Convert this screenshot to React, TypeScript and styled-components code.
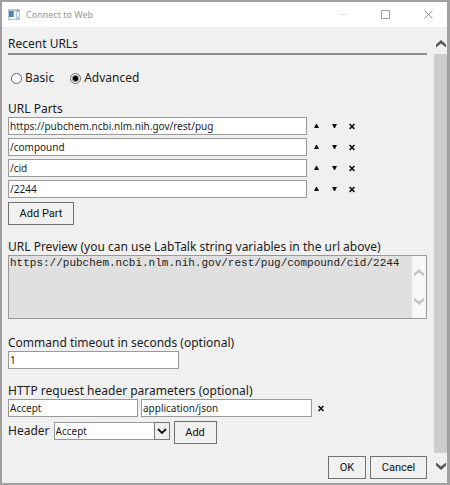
import React, { useState } from "react";
import styled, { createGlobalStyle } from "styled-components";

const GlobalStyle = createGlobalStyle`
  *, *::before, *::after { box-sizing: border-box; }
  body { margin: 0; background: #a0a0a0; }
  button, input, select, textarea { margin: 0; border-radius: 0; }
`;

const uiFont = `"Noto Sans", "Open Sans", sans-serif`;

const Dialog = styled.div`
  display: flex;
  flex-direction: column;
  min-height: 100vh;
  border: 2px solid #a0a0a0;
  border-right-width: 3px;
  background: #f0f0f0;
  color: #1c1c1c;
  font: 12px/16px ${uiFont};
`;

const TitleBar = styled.header`
  display: flex;
  align-items: center;
  gap: 6px;
  height: 25px;
  padding-left: 6px;
  background: #fff;
`;

const Title = styled.h1`
  flex: 1;
  margin: 0;
  color: #999;
  font: 9px/16px ${uiFont};
`;

const WindowButton = styled.button`
  display: flex;
  align-items: center;
  justify-content: center;
  width: 37px;
  height: 24px;
  padding: 0;
  border: 0;
  background: none;
`;

const Body = styled.div`
  display: flex;
  flex: 1;
`;

const Content = styled.main`
  display: flex;
  flex: 1;
  flex-direction: column;
  min-width: 0;
  padding: 9px 7px 4px 6px;
`;

const SectionTitle = styled.h2`
  margin: 0 0 15px;
  padding-bottom: 1px;
  border-bottom: 2px solid #8c8c8c;
  font: 12px/16px ${uiFont};
`;

const RadioRow = styled.div`
  display: flex;
  gap: 16px;
  margin-bottom: 15px;
  padding-left: 3px;
`;

const RadioLabel = styled.label`
  display: flex;
  align-items: center;
  gap: 3px;
`;

const Radio = styled.input`
  appearance: none;
  width: 11px;
  height: 11px;
  border: 1px solid #666;
  border-radius: 50%;
  background: #fff;
  &:checked { background: radial-gradient(circle, #000 0 2px, #fff 4px); }
`;

const Section = styled.section<{ $gap?: number }>`
  display: flex;
  flex-direction: column;
  align-items: flex-start;
  margin-bottom: ${(p) => p.$gap ?? 14}px;
`;

const Label = styled.label`
  display: block;
`;

const PartList = styled.div`
  display: flex;
  flex-direction: column;
  gap: 3px;
  width: 100%;
  margin-bottom: 4px;
`;

const FieldRow = styled.div`
  display: flex;
  align-items: center;
  gap: 3px;
`;

const TextField = styled.input<{ $width: number }>`
  width: ${(p) => p.$width}px;
  height: 18px;
  padding: 0 1px;
  border: 1px solid #999;
  background: #fff;
  color: #1c1c1c;
  font: 10px/16px ${uiFont};
`;

const GlyphGroup = styled.div`
  display: flex;
  gap: 6px;
`;

const GlyphButton = styled.button`
  display: flex;
  align-items: center;
  justify-content: center;
  width: 12px;
  height: 16px;
  padding: 0;
  border: 0;
  background: none;
`;

const PushButton = styled.button<{ $width: number }>`
  width: ${(p) => p.$width}px;
  height: 23px;
  padding: 0;
  border: 1px solid #707070;
  background: #f0f0f0;
  color: #111;
  font: 11px/16px Roboto, "Liberation Sans", sans-serif;
`;

const Preview = styled.div`
  display: flex;
  width: 100%;
  height: 64px;
  border: 1px solid #999;
`;

const PreviewText = styled.textarea`
  flex: 1;
  min-width: 0;
  padding: 0 1px;
  overflow: hidden;
  border: 0;
  background: #e0e0e0;
  color: #222;
  font: 11px/14px "Liberation Mono", monospace;
  resize: none;
`;

const PreviewScroll = styled.div`
  display: flex;
  flex-direction: column;
  align-items: center;
  justify-content: center;
  gap: 20px;
  width: 14px;
  background: #f8f8f8;
`;

const HeaderRow = styled.div`
  display: flex;
  align-items: flex-start;
  gap: 4px;
  margin-top: 4px;
  line-height: 20px;
`;

const SelectBox = styled.div`
  display: grid;
  width: 116px;
  margin-top: 1px;
`;

const Select = styled.select`
  grid-area: 1 / 1;
  appearance: none;
  height: 18px;
  padding: 0 18px 0 1px;
  border: 1px solid #999;
  background: #fff;
  color: #1c1c1c;
  font: 10px/16px ${uiFont};
`;

const SelectArrow = styled.span`
  display: flex;
  grid-area: 1 / 1;
  align-items: center;
  justify-content: center;
  justify-self: end;
  width: 16px;
  height: 18px;
  border: 1px solid #777;
  background: #eee;
  pointer-events: none;
`;

const Footer = styled.footer`
  display: flex;
  justify-content: flex-end;
  gap: 4px;
  margin-top: auto;
`;

const ScrollBar = styled.div`
  display: flex;
  flex-direction: column;
  align-items: center;
  width: 13px;
`;

const ScrollButton = styled.button`
  display: flex;
  align-items: center;
  justify-content: center;
  width: 13px;
  height: 20px;
  padding: 0;
  border: 0;
  background: none;
  &:first-child { margin-top: 7px; }
  &:last-child { height: 30px; padding-bottom: 4px; }
`;

const ScrollThumb = styled.div`
  flex: 1;
  width: 13px;
  background: #cdcdcd;
`;

function Chevron({ up = false, color }: { up?: boolean; color: string }) {
  return (
    <svg width="10" height="8" viewBox="0 0 10 8" aria-hidden="true">
      <path d={up ? "M0 7.5V4.5L5 0l5 4.5v3L5 3.4Z" : "M0 .5v3L5 8l5-4.5v-3L5 4.6Z"} fill={color} />
    </svg>
  );
}

function SelectChevron() {
  return (
    <svg width="10" height="7" viewBox="0 0 10 7" aria-hidden="true">
      <path d="m1 1 4 4 4-4" fill="none" stroke="#111" strokeWidth="1.8" />
    </svg>
  );
}

function Triangle({ up = false }: { up?: boolean }) {
  return (
    <svg width="5" height="5" viewBox="0 0 5 5" aria-hidden="true">
      <path d={up ? "M2 0h1l2 4H0Z" : "M0 0h5L3 4H2Z"} fill="#111" />
    </svg>
  );
}

function Cross() {
  return (
    <svg width="6" height="7" viewBox="0 0 6 7" aria-hidden="true">
      <path d="M.6 1 5.4 6M5.4 1 .6 6" stroke="#111" strokeWidth="1.6" />
    </svg>
  );
}

const AppIcon = () => (
  <svg width="12" height="11" viewBox="0 0 12 11" aria-hidden="true">
    <path fill="#b7c5cf" d="M0 0h12v11H0z" />
    <path fill="#edf4f8" d="M1 2h7v8H1zM9 3h2v5H9z" />
    <path fill="#4c86ae" d="M1 2h4v6H1z" />
    <path fill="#7fa6bd" d="M5 2h1v6H5zM9 1h2v1H9z" />
  </svg>
);

const initialParts = ["https://pubchem.ncbi.nlm.nih.gov/rest/pug", "/compound", "/cid", "/2244"];

export default function App() {
  const [parts, setParts] = useState(initialParts);
  const [mode, setMode] = useState("advanced");

  const move = (from: number, to: number) => {
    if (to < 0 || to >= parts.length) return;
    const next = [...parts];
    [next[from], next[to]] = [next[to], next[from]];
    setParts(next);
  };

  return (
    <>
      <GlobalStyle />
      <Dialog>
        <TitleBar>
          <AppIcon />
          <Title>Connect to Web</Title>
          <WindowButton aria-label="Minimize">
            <svg width="8" height="9"><path d="M0 4.5h8" stroke="#e2e2e2" /></svg>
          </WindowButton>
          <WindowButton aria-label="Maximize">
            <svg width="9" height="9"><path d="M.5.5h8v8h-8z" fill="none" stroke="#999" /></svg>
          </WindowButton>
          <WindowButton aria-label="Close">
            <svg width="9" height="9"><path d="m.5.5 8 8m0-8-8 8" stroke="#999" /></svg>
          </WindowButton>
        </TitleBar>
        <Body>
          <Content>
            <SectionTitle>Recent URLs</SectionTitle>
            <RadioRow>
              <RadioLabel>
                <Radio type="radio" name="mode" checked={mode === "basic"} onChange={() => setMode("basic")} />
                Basic
              </RadioLabel>
              <RadioLabel>
                <Radio type="radio" name="mode" checked={mode === "advanced"} onChange={() => setMode("advanced")} />
                Advanced
              </RadioLabel>
            </RadioRow>
            <Section>
              <Label htmlFor="part-0">URL Parts</Label>
              <PartList>
                {parts.map((part, i) => (
                  <FieldRow key={i}>
                    <TextField
                      $width={299}
                      id={`part-${i}`}
                      aria-label={`URL part ${i + 1}`}
                      value={part}
                      onChange={(e) => setParts(parts.map((p, j) => (j === i ? e.target.value : p)))}
                    />
                    <GlyphGroup>
                      <GlyphButton aria-label="Move up" onClick={() => move(i, i - 1)}><Triangle up /></GlyphButton>
                      <GlyphButton aria-label="Move down" onClick={() => move(i, i + 1)}><Triangle /></GlyphButton>
                      <GlyphButton aria-label="Remove" onClick={() => setParts(parts.filter((_, j) => j !== i))}><Cross /></GlyphButton>
                    </GlyphGroup>
                  </FieldRow>
                ))}
              </PartList>
              <PushButton $width={66} onClick={() => setParts([...parts, ""])}>Add Part</PushButton>
            </Section>
            <Section $gap={16}>
              <Label htmlFor="preview">URL Preview (you can use LabTalk string variables in the url above)</Label>
              <Preview>
                <PreviewText id="preview" readOnly value={parts.join("")} />
                <PreviewScroll>
                  <Chevron up color="#c4c4c4" />
                  <Chevron color="#c4c4c4" />
                </PreviewScroll>
              </Preview>
            </Section>
            <Section>
              <Label htmlFor="timeout">Command timeout in seconds (optional)</Label>
              <TextField $width={171} id="timeout" defaultValue="1" />
            </Section>
            <Section $gap={10}>
              <Label htmlFor="header-name">HTTP request header parameters (optional)</Label>
              <FieldRow>
                <TextField $width={130} id="header-name" defaultValue="Accept" />
                <TextField $width={171} aria-label="Header value" defaultValue="application/json" />
                <GlyphButton aria-label="Remove header"><Cross /></GlyphButton>
              </FieldRow>
              <HeaderRow>
                <Label htmlFor="header-select">Header</Label>
                <SelectBox>
                  <Select id="header-select" defaultValue="Accept">
                    <option>Accept</option>
                  </Select>
                  <SelectArrow>
                    <SelectChevron />
                  </SelectArrow>
                </SelectBox>
                <PushButton $width={43}>Add</PushButton>
              </HeaderRow>
            </Section>
            <Footer>
              <PushButton $width={38}>OK</PushButton>
              <PushButton $width={57}>Cancel</PushButton>
            </Footer>
          </Content>
          <ScrollBar>
            <ScrollButton aria-label="Scroll up"><Chevron up color="#555" /></ScrollButton>
            <ScrollThumb />
            <ScrollButton aria-label="Scroll down"><Chevron color="#555" /></ScrollButton>
          </ScrollBar>
        </Body>
      </Dialog>
    </>
  );
}
